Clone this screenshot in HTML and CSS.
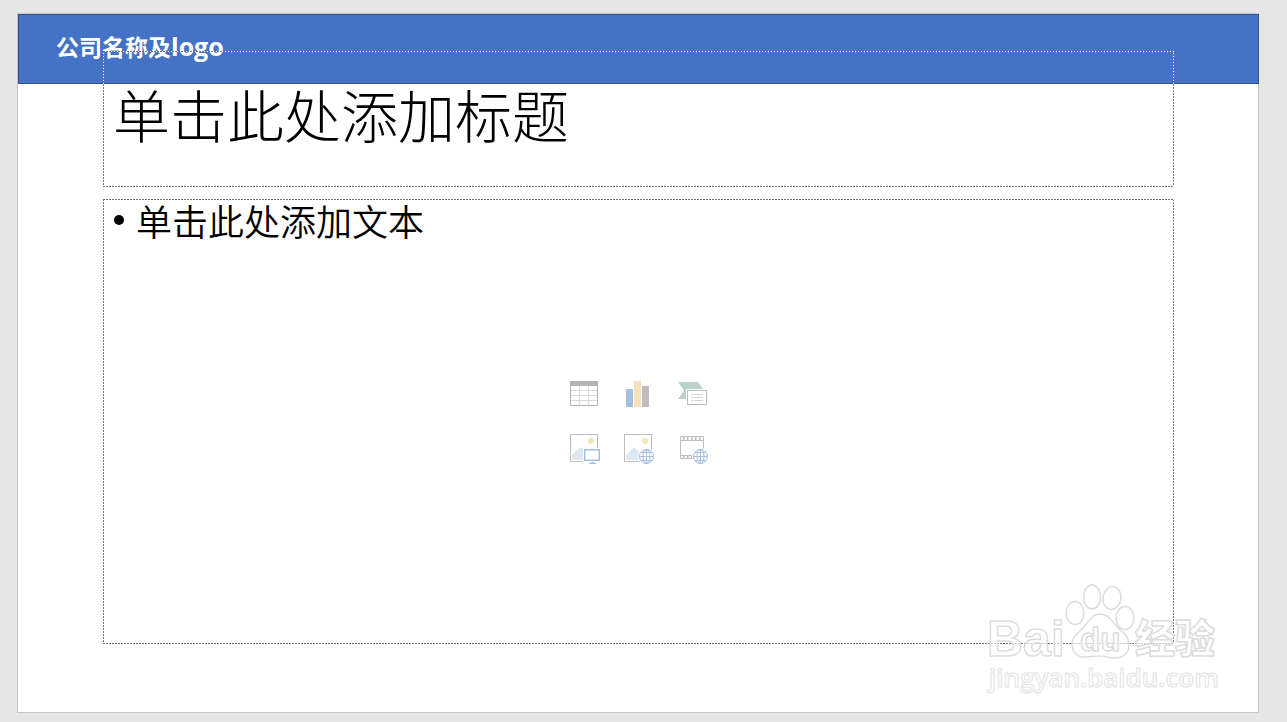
FILE: index.html
```html
<!DOCTYPE html>
<html lang="zh-CN">
<head>
<meta charset="utf-8">
<title>公司名称及logo</title>
<link rel="stylesheet" href="styles.css">
</head>
<body>
<main class="slide">
  <header class="banner">公司名称及<span class="banner-latin">logo</span></header>
  <section class="placeholder title-box"><h1 class="title">单击此处添加标题</h1></section>
  <section class="placeholder content-box">
    <ul class="bullets"><li class="bullet">单击此处添加文本</li></ul>
    <div class="inserts">
      <button class="insert" type="button" aria-label="插入表格">
        <svg width="32" height="32" viewBox="0 0 32 32" shape-rendering="crispEdges"><path fill="#b5b5b5" d="M1 2h28v5H1z"/><path fill="none" stroke="#b5b5b5" d="M1.5 6.500V26.500h27V6.500"/><path fill="none" stroke="#dadada" d="M2 11.500h26M2 16.500h26M2 21.500h26M10.500 7v19M19.500 7v19"/></svg>
      </button>
      <button class="insert" type="button" aria-label="插入图表">
        <svg width="32" height="32" viewBox="0 0 32 32" shape-rendering="crispEdges"><path fill="#a5bfde" d="M3 10h7v18H3z"/><path fill="#f5e2bb" d="M11 2h7v26h-7z"/><path fill="#bdbdbd" d="M19 7h7v21h-7z"/></svg>
      </button>
      <button class="insert" type="button" aria-label="插入 SmartArt 图形">
        <svg width="32" height="32" viewBox="0 0 32 32"><path fill="#b9d1c9" d="M1 3h20l6 8.500V20H1l6-8.500z"/><path fill="#fff" d="M9 10h22v17H9z"/><rect x="10.500" y="11.500" width="19" height="14" fill="#fff" stroke="#bdbdbd"/><path stroke="#d2d2d2" d="M14 15.500h2M17 15.500h9M14 18.500h2M17 18.500h9M14 21.500h2M17 21.500h9"/></svg>
      </button>
      <button class="insert" type="button" aria-label="图片">
        <svg width="32" height="32" viewBox="0 0 32 32"><rect x="1.500" y="1.500" width="27" height="27" fill="none" stroke="#bdbdbd"/><path fill="#dde8f1" d="M3 27v-5l7-7h3l7 7v5z"/><circle cx="22" cy="8" r="3" fill="#f5e2bb"/><path fill="#fff" d="M14 15h18v17H14z"/><rect x="15.750" y="16.750" width="14.500" height="10.500" fill="#fff" stroke="#a5bfde" stroke-width="1.500"/><path fill="#a5bfde" d="M22 29h3v1h2v1h-7v-1h2z"/></svg>
      </button>
      <button class="insert" type="button" aria-label="联机图片">
        <svg width="32" height="32" viewBox="0 0 32 32"><rect x="1.500" y="1.500" width="27" height="27" fill="none" stroke="#bdbdbd"/><path fill="#dde8f1" d="M3 27v-5l7-7h2l7 7v5z"/><circle cx="22" cy="8" r="3" fill="#f5e2bb"/><circle cx="23.500" cy="23.500" r="8.500" fill="#fff"/><g fill="none" stroke="#a5bfde"><circle cx="23.500" cy="23.500" r="7"/><ellipse cx="23.500" cy="23.500" rx="3.500" ry="7"/><path d="M23.500 16.500v14M16.500 23.500h14M18 19.500h11M18 27.500h11"/></g></svg>
      </button>
      <button class="insert" type="button" aria-label="插入视频">
        <svg width="32" height="32" viewBox="0 0 32 32"><path fill="none" stroke="#bdbdbd" d="M3.500 3.500h23v22h-23zM3.500 7.500h23M3.500 22.500h23"/><path stroke="#bdbdbd" stroke-width="3" stroke-dasharray="1.500 2.500" d="M6 5.500h20M6 24h20"/><circle cx="23.500" cy="23.500" r="8.500" fill="#fff"/><g fill="none" stroke="#a5bfde"><circle cx="23.500" cy="23.500" r="7"/><ellipse cx="23.500" cy="23.500" rx="3.500" ry="7"/><path d="M23.500 16.500v14M16.500 23.500h14M18 19.500h11M18 27.500h11"/></g></svg>
      </button>
    </div>
  </section>
  <svg class="watermark" width="240" height="120" viewBox="0 0 240 120" role="img" aria-label="Baidu经验">
    <g class="mark">
      <ellipse cx="95" cy="33" rx="9" ry="11.500"/>
      <ellipse cx="112" cy="17" rx="8.500" ry="12"/>
      <ellipse cx="132" cy="18" rx="9" ry="11.500" transform="rotate(10 132 18)"/>
      <ellipse cx="145" cy="38" rx="9" ry="11.500"/>
      <path d="M120 34c9 0 12 8 18 14 6 5 11 9 11 17 0 9-7 13-14 13-6 0-9-2-15-2s-10 1-16 1c-8 0-12-6-12-13 0-7 6-11 11-16 6-7 9-14 17-14z"/>
      <text class="mark-latin" x="7" y="76">Bai</text>
      <text class="mark-du" x="100" y="71">du</text>
      <text class="mark-cjk" x="155" y="73">经验</text>
      <text class="mark-url" x="9" y="107">jingyan.baidu.com</text>
    </g>
  </svg>
</main>
</body>
</html>
```
FILE: styles.css
```css
* {
  box-sizing: border-box;
}

body {
  margin: 0;
  padding: 13px 28px 9px 17px;
  min-height: 100vh;
  display: flex;
  background: #e6e6e6;
  color: #000;
  font-family: "Noto Sans CJK SC", "Open Sans", sans-serif;
}

.slide {
  position: relative;
  flex: 1;
  display: flex;
  flex-direction: column;
  padding-bottom: 68px;
  background: #fff;
  border: 1px solid #c6c6c6;
}

.banner {
  height: 70px;
  margin-right: -1px;
  padding: 0 37px;
  background: #4472c4;
  border: 1px solid #2f528f;
  color: #fff;
  font-size: 23px;
  font-weight: 700;
  line-height: 62px;
}

.banner-latin {
  font-family: "Open Sans", sans-serif;
  font-size: 25px;
}

/* Dashed frame: two grey pixels, one white pixel */
.placeholder {
  margin: 0 84px 0 85px;
  background:
    repeating-linear-gradient(90deg, #777 0 2px, #fff 2px 3px) top / 100% 1px no-repeat,
    repeating-linear-gradient(90deg, #777 0 2px, #fff 2px 3px) bottom / 100% 1px no-repeat,
    repeating-linear-gradient(#777 0 2px, #fff 2px 3px) left / 1px 100% no-repeat,
    repeating-linear-gradient(#777 0 2px, #fff 2px 3px) right / 1px 100% no-repeat;
}

.title-box {
  min-height: 136px;
  margin-top: -33px;
  padding: 22px 10px;
}

.title {
  margin: 0;
  font-size: 57px;
  font-weight: 300;
  line-height: 80px;
}

.content-box {
  flex: 1;
  margin-top: 12px;
  display: flex;
  flex-direction: column;
}

.bullets {
  margin: 0;
  padding: 0 11px;
  list-style: none;
}

.bullet {
  display: flex;
  align-items: center;
  gap: 12px;
  font-size: 36px;
  font-weight: 350;
  line-height: 42px;
}

.bullet::before {
  content: "";
  width: 10px;
  height: 10px;
  border-radius: 50%;
  background: #000;
}

.inserts {
  align-self: center;
  display: grid;
  grid-template-columns: repeat(3, 32px);
  gap: 22px;
  margin-top: 138px;
}

.insert {
  display: block;
  width: 32px;
  height: 32px;
  padding: 0;
  border: 0;
  background: none;
}

.insert svg {
  display: block;
}

.watermark {
  position: absolute;
  right: 38px;
  bottom: 12px;
}

.mark {
  fill: rgba(255, 255, 255, 0.6);
  stroke: #dcdcdc;
  stroke-width: 1.500px;
  stroke-linejoin: round;
}

.mark-latin {
  font: 700 50px "Liberation Sans", sans-serif;
}

.mark-du {
  font: 700 33px "Liberation Sans", sans-serif;
}

.mark-cjk {
  font: 900 40px "Noto Sans CJK SC", sans-serif;
}

.mark-url {
  font: 600 26px "Open Sans", sans-serif;
  stroke: #e2e2e2;
  stroke-width: 1px;
}
```
